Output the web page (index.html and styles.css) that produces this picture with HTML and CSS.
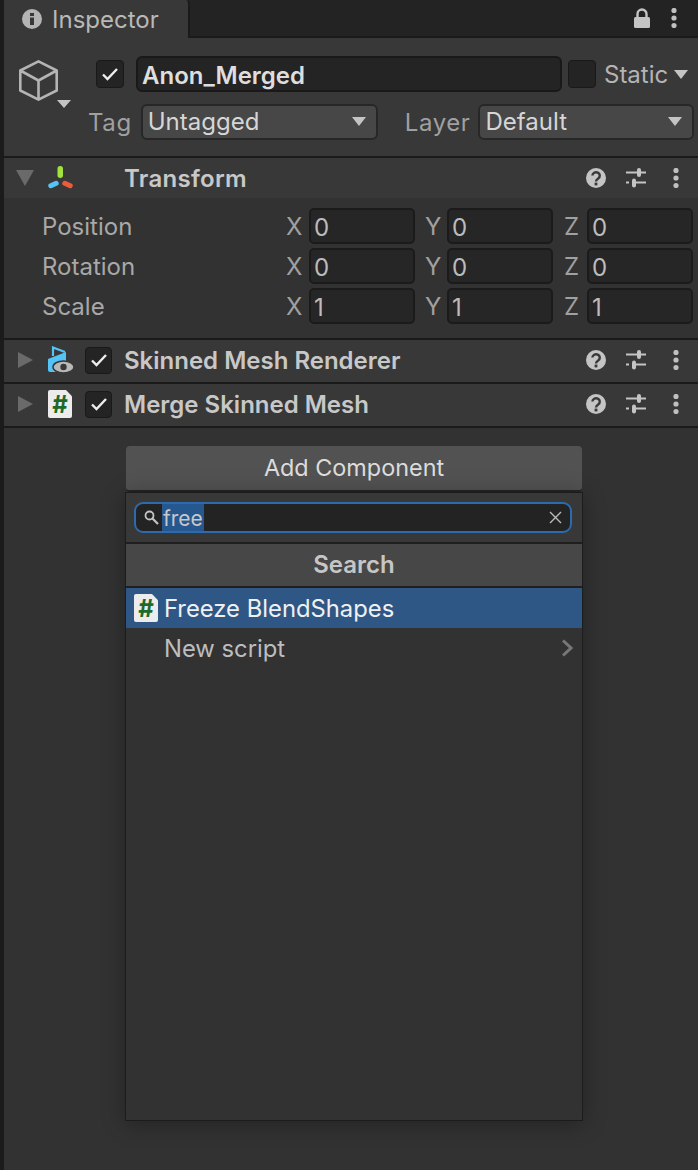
FILE: index.html
```html
<!DOCTYPE html>
<html lang="en">
<head>
    <meta charset="UTF-8">
    <meta name="viewport" content="width=device-width, initial-scale=1.0">
    <title>Inspector</title>
    <link rel="stylesheet" href="styles.css">
</head>
<body>
    <div class="window">
        <div class="tabbar">
            <div class="tab">
                <svg class="tab-icon" width="20" height="20" viewBox="0 0 20 20"><circle cx="10" cy="10" r="10" fill="#b4b4b4"/><rect x="8" y="4" width="4" height="3" fill="#383838"/><rect x="8" y="8.5" width="4" height="7.5" fill="#383838"/></svg>
                <span>Inspector</span>
            </div>
            <div class="tabbar-tools">
                <svg width="16" height="20" viewBox="0 0 16 20"><path d="M3.5 10V6a4.500 4.500 0 0 1 9 0v4" fill="none" stroke="#c4c4c4" stroke-width="2.400"/><rect x="0" y="9" width="16" height="11" rx="1.500" fill="#c4c4c4"/></svg>
                <svg class="dots" width="6" height="20" viewBox="0 0 6 20"><circle cx="3" cy="2.500" r="2.600"/><circle cx="3" cy="10" r="2.600"/><circle cx="3" cy="17.500" r="2.600"/></svg>
            </div>
        </div>

        <div class="object-head">
            <div class="object-row">
                <svg class="cube" width="54" height="54" viewBox="0 0 54 54"><path d="M19.500 1.300 L37.700 10.500 V30.500 L19.500 39.700 L1.300 30.500 V10.500 Z M1.300 10.500 L19.500 20.500 L37.700 10.500 M19.500 20.500 V39.700" fill="none" stroke="#b4b4b4" stroke-width="2.600" stroke-linejoin="round"/><path d="M38 40h14l-7 8z" fill="#c4c4c4"/></svg>
                <span class="check checked"><svg width="18" height="14" viewBox="0 0 18 14"><path d="M2 7.500 L6.500 12 L16 2" fill="none" stroke="#eee" stroke-width="2.400"/></svg></span>
                <div class="name-field">Anon_Merged</div>
                <span class="check"></span>
                <span class="static-label">Static</span>
                <span class="arrow-down static-arrow"></span>
            </div>
            <div class="tag-row">
                <span class="tag-label">Tag</span>
                <div class="dropdown tag-drop"><span>Untagged</span><span class="arrow-down"></span></div>
                <span class="layer-label">Layer</span>
                <div class="dropdown layer-drop"><span>Default</span><span class="arrow-down"></span></div>
            </div>
        </div>

        <div class="comp-head transform-head">
            <span class="fold fold-open"></span>
            <svg class="comp-icon" width="26" height="26" viewBox="0 0 26 26"><rect x="9.500" y="1" width="5.500" height="12" rx="2.700" fill="#a3e23c"/><rect x="0" y="17" width="11" height="5" rx="2.500" transform="rotate(-25 5.500 19.500)" fill="#54c3f5"/><rect x="14" y="17" width="11" height="5" rx="2.500" transform="rotate(25 19.500 19.500)" fill="#ef5b38"/></svg>
            <span class="comp-title transform-title">Transform</span>
            <div class="comp-tools">
                <svg width="20" height="20" viewBox="0 0 20 20"><circle cx="10" cy="10" r="10" fill="#c4c4c4"/><path d="M6.400 7.600a3.700 3.400 0 1 1 5.800 2.800c-1.400.9-2.200 1.500-2.200 3" fill="none" stroke="#383838" stroke-width="2.400"/><rect x="8.600" y="14.600" width="2.800" height="2.800" fill="#383838"/></svg>
                <svg class="sliders" width="20" height="20" viewBox="0 0 20 20"><path d="M0 4.500h20M0 14.500h3M7 14.500h13" stroke="#c4c4c4" stroke-width="2"/><rect x="11" y="0" width="4" height="9" rx="2" fill="#c4c4c4"/><rect x="6" y="10.500" width="4" height="9" rx="2" fill="#c4c4c4"/></svg>
                <svg class="dots" width="6" height="20" viewBox="0 0 6 20"><circle cx="3" cy="2.500" r="2.600"/><circle cx="3" cy="10" r="2.600"/><circle cx="3" cy="17.500" r="2.600"/></svg>
            </div>
        </div>
        <div class="transform-body">
            <div class="vec-row">
                <span class="vec-label">Position</span>
                <span class="axis">X</span><div class="num">0</div>
                <span class="axis axis-y">Y</span><div class="num">0</div>
                <span class="axis axis-z">Z</span><div class="num">0</div>
            </div>
            <div class="vec-row">
                <span class="vec-label">Rotation</span>
                <span class="axis">X</span><div class="num">0</div>
                <span class="axis axis-y">Y</span><div class="num">0</div>
                <span class="axis axis-z">Z</span><div class="num">0</div>
            </div>
            <div class="vec-row">
                <span class="vec-label">Scale</span>
                <span class="axis">X</span><div class="num">1</div>
                <span class="axis axis-y">Y</span><div class="num">1</div>
                <span class="axis axis-z">Z</span><div class="num">1</div>
            </div>
        </div>

        <div class="comp-head">
            <span class="fold"></span>
            <svg class="comp-icon" width="26" height="28" viewBox="0 0 26 28"><path d="M0 13 L18 6 V26 H2 Q0 26 0 24 Z" fill="#54c3f5"/><path d="M5 10 V1.500 L17 6" fill="none" stroke="#54c3f5" stroke-width="2.200"/><ellipse cx="15.500" cy="21" rx="10.500" ry="6" fill="#b9b9b9" stroke="#383838" stroke-width="1.500"/><circle cx="15.500" cy="21" r="3.200" fill="#383838"/></svg>
            <span class="check checked"><svg width="18" height="14" viewBox="0 0 18 14"><path d="M2 7.500 L6.500 12 L16 2" fill="none" stroke="#eee" stroke-width="2.400"/></svg></span>
            <span class="comp-title">Skinned Mesh Renderer</span>
            <div class="comp-tools">
                <svg width="20" height="20" viewBox="0 0 20 20"><circle cx="10" cy="10" r="10" fill="#c4c4c4"/><path d="M6.400 7.600a3.700 3.400 0 1 1 5.800 2.800c-1.400.9-2.200 1.500-2.200 3" fill="none" stroke="#383838" stroke-width="2.400"/><rect x="8.600" y="14.600" width="2.800" height="2.800" fill="#383838"/></svg>
                <svg class="sliders" width="20" height="20" viewBox="0 0 20 20"><path d="M0 4.500h20M0 14.500h3M7 14.500h13" stroke="#c4c4c4" stroke-width="2"/><rect x="11" y="0" width="4" height="9" rx="2" fill="#c4c4c4"/><rect x="6" y="10.500" width="4" height="9" rx="2" fill="#c4c4c4"/></svg>
                <svg class="dots" width="6" height="20" viewBox="0 0 6 20"><circle cx="3" cy="2.500" r="2.600"/><circle cx="3" cy="10" r="2.600"/><circle cx="3" cy="17.500" r="2.600"/></svg>
            </div>
        </div>
        <div class="comp-head">
            <span class="fold"></span>
            <span class="comp-icon script-icon">#</span>
            <span class="check checked"><svg width="18" height="14" viewBox="0 0 18 14"><path d="M2 7.500 L6.500 12 L16 2" fill="none" stroke="#eee" stroke-width="2.400"/></svg></span>
            <span class="comp-title">Merge Skinned Mesh</span>
            <div class="comp-tools">
                <svg width="20" height="20" viewBox="0 0 20 20"><circle cx="10" cy="10" r="10" fill="#c4c4c4"/><path d="M6.400 7.600a3.700 3.400 0 1 1 5.800 2.800c-1.400.9-2.200 1.500-2.200 3" fill="none" stroke="#383838" stroke-width="2.400"/><rect x="8.600" y="14.600" width="2.800" height="2.800" fill="#383838"/></svg>
                <svg class="sliders" width="20" height="20" viewBox="0 0 20 20"><path d="M0 4.500h20M0 14.500h3M7 14.500h13" stroke="#c4c4c4" stroke-width="2"/><rect x="11" y="0" width="4" height="9" rx="2" fill="#c4c4c4"/><rect x="6" y="10.500" width="4" height="9" rx="2" fill="#c4c4c4"/></svg>
                <svg class="dots" width="6" height="20" viewBox="0 0 6 20"><circle cx="3" cy="2.500" r="2.600"/><circle cx="3" cy="10" r="2.600"/><circle cx="3" cy="17.500" r="2.600"/></svg>
            </div>
        </div>

        <div class="add-area">
            <button class="add-btn">Add Component</button>
            <div class="popup">
                <div class="search-row">
                    <div class="search-box">
                        <svg class="mag" width="15" height="15" viewBox="0 0 15 15"><circle cx="5.500" cy="5.500" r="4" fill="none" stroke="#c4c4c4" stroke-width="1.800"/><path d="M8.500 8.500 L14 14" stroke="#c4c4c4" stroke-width="2.200"/></svg>
                        <span class="search-text">free</span>
                        <svg class="clear" width="13" height="13" viewBox="0 0 13 13"><path d="M1 1 L12 12 M12 1 L1 12" stroke="#bbb" stroke-width="1.400"/></svg>
                    </div>
                </div>
                <div class="popup-title">Search</div>
                <div class="result selected">
                    <span class="script-icon small">#</span>
                    <span>Freeze BlendShapes</span>
                </div>
                <div class="result">
                    <span class="result-plain">New script</span>
                    <svg class="chev" width="12" height="18" viewBox="0 0 12 18"><path d="M2 1.500 L10 9 L2 16.500" fill="none" stroke="#777" stroke-width="3"/></svg>
                </div>
            </div>
        </div>
    </div>
</body>
</html>
```

FILE: styles.css
```css
* {
    box-sizing: border-box;
}
html, body {
    margin: 0;
    padding: 0;
}
body {
    font-family: Inter, "Liberation Sans", sans-serif;
    font-size: 24px;
    color: #c4c4c4;
    background: #1b1b1b;
}
.window {
    margin-left: 4px;
    height: 1170px;
    overflow: hidden;
    background: #323232;
}
.tabbar {
    height: 38px;
    display: flex;
    justify-content: space-between;
    background: #232323;
    border-bottom: 2px solid #1a1a1a;
}
.tab {
    width: 186px;
    height: 38px;
    flex: none;
    padding-left: 18px;
    display: flex;
    align-items: center;
    gap: 10px;
    background: #383838;
    border-right: 2px solid #1a1a1a;
    border-top-right-radius: 4px;
    color: #b8b8b8;
}
.tabbar-tools {
    display: flex;
    align-items: center;
    gap: 21px;
    padding-right: 21px;
}
.dots {
    fill: #c0c0c0;
}
.object-head {
    height: 120px;
    background: #383838;
    border-bottom: 2px solid #1a1a1a;
    padding-top: 18px;
}
.object-row {
    display: flex;
    align-items: center;
    height: 36px;
    padding-left: 15px;
}
.cube {
    margin-top: 26px;
    margin-right: 23px;
    flex: none;
}
.check {
    width: 28px;
    height: 28px;
    flex: none;
    display: flex;
    align-items: center;
    justify-content: center;
    background: #242424;
    border: 1px solid #191919;
    border-radius: 4px;
}
.name-field {
    width: 426px;
    height: 36px;
    margin-left: 12px;
    margin-right: 6px;
    padding-left: 4px;
    line-height: 35px;
    font-weight: 600;
    color: #dedede;
    background: #242424;
    border: 2px solid #191919;
    border-radius: 6px;
}
.static-label {
    margin-left: 8px;
    margin-right: 6px;
    color: #b4b4b4;
}
.arrow-down {
    width: 0;
    height: 0;
    border-left: 7px solid transparent;
    border-right: 7px solid transparent;
    border-top: 9px solid #c4c4c4;
}
.tag-row {
    display: flex;
    align-items: center;
    height: 36px;
    margin-top: 12px;
    padding-left: 84px;
}
.tag-label, .layer-label {
    color: #a0a0a0;
    letter-spacing: 0.6px;
}
.dropdown {
    height: 36px;
    flex: none;
    display: flex;
    align-items: center;
    justify-content: space-between;
    padding: 0 10px 2px 5px;
    background: #474747;
    border: 2px solid #272727;
    border-radius: 6px;
    color: #d6d6d6;
}
.tag-drop {
    width: 237px;
    margin-left: 9px;
}
.layer-label {
    margin-left: 27px;
}
.layer-drop {
    width: 216px;
    margin-left: 8px;
}
.comp-head {
    height: 44px;
    display: flex;
    align-items: center;
    padding-left: 14px;
    padding-bottom: 2px;
    background: #383838;
    border-bottom: 2px solid #1a1a1a;
}
.transform-head {
    height: 40px;
    padding-bottom: 0;
    border-bottom: 0;
}
.fold {
    width: 0;
    height: 0;
    border-top: 8px solid transparent;
    border-bottom: 8px solid transparent;
    border-left: 15px solid #6a6a6a;
}
.fold-open {
    margin-left: -2px;
    margin-right: -1px;
    border-left: 9px solid transparent;
    border-right: 9px solid transparent;
    border-top: 16px solid #6a6a6a;
    border-bottom: 0;
}
.comp-icon {
    margin-left: 15px;
    flex: none;
}
.comp-head .check {
    width: 27px;
    height: 27px;
    margin-left: 11px;
}
.comp-title {
    margin-left: 12px;
    font-weight: 600;
    color: #c8c8c8;
}
.transform-title {
    margin-left: 50px;
    letter-spacing: 0.3px;
}
.comp-tools {
    margin-left: auto;
    padding-right: 19px;
    display: flex;
    align-items: center;
    gap: 20px;
}
.sliders {
    margin-right: 7px;
}
.script-icon {
    width: 24px;
    height: 28px;
    flex: none;
    display: flex;
    align-items: center;
    justify-content: center;
    margin-right: 2px;
    background: #ececec;
    border-radius: 2px;
    clip-path: polygon(0 0, 75% 0, 100% 22%, 100% 100%, 0 100%);
    color: #1f6a2a;
    font-weight: 700;
    font-size: 24px;
}
.transform-body {
    height: 142px;
    padding-top: 8px;
    background: #323232;
    border-bottom: 2px solid #1a1a1a;
}
.vec-row {
    height: 40px;
    display: flex;
    align-items: center;
    padding-right: 4px;
}
.vec-label {
    width: 279px;
    padding-left: 38px;
    color: #a8a8a8;
}
.axis {
    width: 26px;
    padding-left: 3px;
    color: #a0a0a0;
}
.axis-y {
    margin-left: 8px;
    width: 24px;
    padding-left: 2px;
}
.axis-z {
    margin-left: 8px;
    width: 26px;
}
.num {
    width: 106px;
    height: 36px;
    padding-left: 3px;
    line-height: 36px;
    background: #262626;
    border: 2px solid #1b1b1b;
    border-radius: 5px;
    color: #bcbcbc;
}
.add-area {
    padding: 18px 0 0 121px;
}
.add-btn {
    display: block;
    width: 456px;
    height: 46px;
    margin-left: 1px;
    padding-bottom: 2px;
    font: inherit;
    font-size: 23.4px;
    color: #dcdcdc;
    background: #525252;
    border: 0;
    border-bottom: 2px solid #242424;
    border-radius: 4px;
}
.popup {
    width: 458px;
    height: 629px;
    background: #323232;
    border: 1px solid #1c1c1c;
    box-shadow: 0 3px 22px rgba(0, 0, 0, 0.3);
}
.search-row {
    height: 51px;
    padding: 9px 10px 0 8px;
    background: #383838;
    border-bottom: 2px solid #1f1f1f;
}
.search-box {
    height: 31px;
    display: flex;
    align-items: center;
    padding: 0 8px;
    background: #232323;
    border: 2px solid #2a6cae;
    border-radius: 9px;
}
.mag {
    flex: none;
    margin-right: 3px;
}
.search-text {
    height: 27px;
    line-height: 29px;
    font-size: 21px;
    background: #27578f;
    color: #c8c8c8;
    padding: 0 1px;
}
.clear {
    margin-left: auto;
}
.popup-title {
    height: 44px;
    line-height: 41px;
    text-align: center;
    font-weight: 600;
    color: #c6c6c6;
    background: #474747;
    border-bottom: 2px solid #1f1f1f;
}
.result {
    height: 40px;
    display: flex;
    align-items: center;
    padding-left: 8px;
    padding-right: 9px;
    font-size: 23.8px;
}
.selected {
    background: #2f5786;
    color: #f0f0f0;
}
.small {
    margin-right: 6px;
}
.result-plain {
    margin-left: 30px;
    color: #bdbdbd;
}
.chev {
    margin-left: auto;
}
```
